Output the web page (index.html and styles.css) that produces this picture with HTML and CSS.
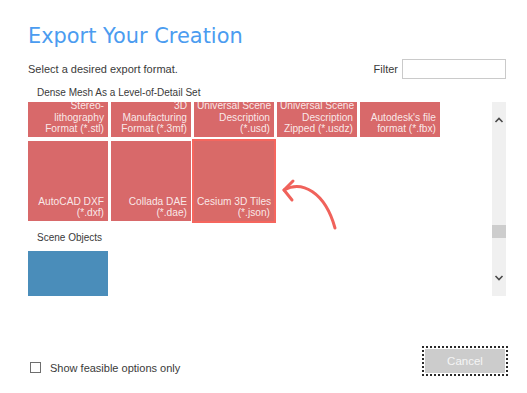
FILE: index.html
```html
<!DOCTYPE html>
<html>
<head>
<meta charset="utf-8">
<link rel="stylesheet" href="styles.css">
</head>
<body>
<div class="dialog">
  <h1 class="title">Export Your Creation</h1>
  <div class="toprow">
    <span class="hint">Select a desired export format.</span>
    <label class="filter"><span class="filter-label">Filter</span><input class="filter-input" type="text"></label>
  </div>
  <div class="section-title">Dense Mesh As a Level-of-Detail Set</div>
  <div class="scroll">
    <div class="viewport">
      <div class="content">
        <div class="grid">
          <div class="tile">Stereo-<br>lithography<br>Format (*.stl)</div>
          <div class="tile">3D<br>Manufacturing<br>Format (*.3mf)</div>
          <div class="tile">Universal Scene<br>Description<br>(*.usd)</div>
          <div class="tile">Universal Scene<br>Description<br>Zipped (*.usdz)</div>
          <div class="tile">Autodesk's file<br>format (*.fbx)</div>
          <div class="tile">AutoCAD DXF<br>(*.dxf)</div>
          <div class="tile">Collada DAE<br>(*.dae)</div>
          <div class="tile selected">Cesium 3D Tiles<br>(*.json)</div>
        </div>
        <div class="section-title inner">Scene Objects</div>
        <div class="grid">
          <div class="tile blue"></div>
        </div>
      </div>
    </div>
    <div class="scrollbar">
      <div class="sb-btn">
        <svg width="10" height="6" viewBox="0 0 10 6"><path d="M1.5 5 L5 1.5 L8.5 5" fill="none" stroke="#4a4a4a" stroke-width="1.6"/></svg>
      </div>
      <div class="sb-space-top"></div>
      <div class="sb-thumb"></div>
      <div class="sb-space"></div>
      <div class="sb-btn">
        <svg width="10" height="6" viewBox="0 0 10 6"><path d="M1.5 1 L5 4.5 L8.5 1" fill="none" stroke="#4a4a4a" stroke-width="1.6"/></svg>
      </div>
    </div>
  </div>
  <div class="footer">
    <label class="check"><span class="box"></span><span class="check-label">Show feasible options only</span></label>
    <div class="cancel-wrap"><button class="cancel">Cancel</button></div>
  </div>
</div>
<svg class="annot" width="527" height="393" viewBox="0 0 527 393">
  <path d="M284 190 C302 180 325 192 335 228" fill="none" stroke="#f0625b" stroke-width="3" stroke-linecap="round"/>
  <path d="M293 181 L284 190 L292 200" fill="none" stroke="#f0625b" stroke-width="3" stroke-linecap="round" stroke-linejoin="round"/>
</svg>
</body>
</html>
```

FILE: styles.css
```css
html, body {
  margin: 0;
  padding: 0;
  background: #ffffff;
}
body {
  width: 527px;
  height: 393px;
  overflow: hidden;
  position: relative;
  font-family: "Liberation Sans", Arial, sans-serif;
  color: #3a3a3a;
}
.dialog {
  padding: 23.5px 20px 0 28px;
}
.title {
  margin: 0;
  font-family: "DejaVu Sans", Verdana, sans-serif;
  font-weight: 400;
  font-size: 20.9px;
  line-height: 24px;
  color: #4b9cf0;
}
.toprow {
  margin-top: 11.5px;
  height: 20px;
  display: flex;
  align-items: center;
  justify-content: space-between;
  padding-right: 1px;
}
.hint {
  font-size: 11px;
}
.filter {
  display: flex;
  align-items: center;
}
.filter-label {
  font-size: 11px;
  margin-right: 4px;
}
.filter-input {
  box-sizing: border-box;
  width: 104px;
  height: 20px;
  margin: 0;
  border: 1px solid #cacaca;
  padding: 0 3px;
  background: #fff;
}
.section-title {
  margin-top: 7.5px;
  padding-left: 9px;
  font-size: 10px;
  line-height: 12px;
  color: #3a3a3a;
}
.section-title.inner {
  margin-top: 10.7px;
  margin-bottom: 7.3px;
}
.scroll {
  margin-top: 3.5px;
  height: 194px;
  display: flex;
  margin-right: 1px;
}
.viewport {
  flex: 1;
  overflow: hidden;
}
.content {
  margin-top: -45px;
}
.grid {
  display: grid;
  grid-template-columns: repeat(5, 80px);
  column-gap: 3px;
  row-gap: 4px;
}
.tile {
  box-sizing: border-box;
  height: 80px;
  background: #d8696a;
  color: rgba(255, 255, 255, 0.86);
  font-size: 10.2px;
  line-height: 11.5px;
  text-align: right;
  padding: 0 4px 2.5px 3px;
  display: flex;
  flex-direction: column;
  justify-content: flex-end;
  white-space: nowrap;
}
.tile.selected {
  outline: 2px solid #f5665e;
  background: #d96a68;
}
.tile.blue {
  background: #4a8dba;
}
.scrollbar {
  width: 14px;
  background: #f0f0f0;
  display: flex;
  flex-direction: column;
}
.sb-btn {
  height: 36px;
  display: flex;
  align-items: center;
  justify-content: center;
}
.sb-space-top {
  height: 87px;
}
.sb-thumb {
  height: 13px;
  background: #cdcdcd;
}
.sb-space {
  flex: 1;
}
.footer {
  margin-top: 50px;
  display: flex;
  justify-content: space-between;
  align-items: flex-start;
}
.check {
  display: flex;
  align-items: center;
  margin-top: 15.7px;
  padding-left: 2px;
}
.box {
  box-sizing: border-box;
  width: 11px;
  height: 11px;
  border: 1px solid #6e6e6e;
  background: #fff;
  margin-right: 9px;
}
.check-label {
  font-size: 11px;
  line-height: 12px;
}
.cancel-wrap {
  border: 2px dotted #2a2a2a;
  padding: 1px;
  margin-right: -1px;
}
.cancel {
  display: block;
  width: 80px;
  height: 24px;
  margin: 0;
  border: none;
  background: #cccccc;
  color: #f5f5f5;
  font-family: "Liberation Sans", Arial, sans-serif;
  font-size: 11.5px;
  padding: 0;
}
.annot {
  position: absolute;
  left: 0;
  top: 0;
  pointer-events: none;
}
```
